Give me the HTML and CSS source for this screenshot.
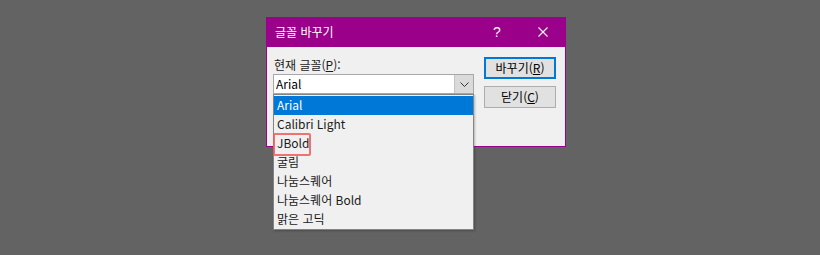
FILE: index.html
```html
<!DOCTYPE html>
<html lang="ko">
<head>
    <meta charset="UTF-8">
    <title>글꼴 바꾸기</title>
    <link rel="stylesheet" href="styles.css">
</head>
<body>
    <div class="dialog">
        <div class="titlebar">
            <span class="title">글꼴 바꾸기</span>
            <span class="caption-btn help">?</span>
            <span class="caption-btn close">
                <svg width="10" height="10" viewBox="0 0 10 10">
                    <path d="M0.5 0.5 L9.5 9.5 M9.5 0.5 L0.5 9.5" stroke="#fff" stroke-width="1.1" fill="none"/>
                </svg>
            </span>
        </div>

        <div class="dialog-body">
            <div class="left-col">
                <div class="field-label">현재 글꼴(<u>P</u>):</div>
                <div class="combo">
                    <div class="combo-value">Arial</div>
                    <div class="combo-arrow">
                        <svg width="9" height="5" viewBox="0 0 9 5">
                            <path d="M0.5 0.5 L4.5 4.5 L8.5 0.5" stroke="#333" stroke-width="1" fill="none"/>
                        </svg>
                    </div>

                    <ul class="font-list">
                        <li class="selected">Arial</li>
                        <li>Calibri Light</li>
                        <li>JBold</li>
                        <li>굴림</li>
                        <li>나눔스퀘어</li>
                        <li>나눔스퀘어 Bold</li>
                        <li>맑은 고딕</li>
                        <div class="mark"></div>
                    </ul>
                </div>
            </div>

            <div class="right-col">
                <button class="btn btn-default">바꾸기(<u>R</u>)</button>
                <button class="btn">닫기(<u>C</u>)</button>
            </div>
        </div>
    </div>
</body>
</html>
```

FILE: styles.css
```css
* {
    margin: 0;
    padding: 0;
    box-sizing: border-box;
}

body {
    background: #636363;
    height: 255px;
    font-family: "Noto Sans CJK KR", "Noto Sans", sans-serif;
    font-size: 12px;
    color: #1a1a1a;
    overflow: hidden;
}

.dialog {
    margin: 17px 0 0 266px;
    width: 300px;
    height: 130px;
    background: #f0f0f0;
    border: 1px solid #9b008a;
    border-top: none;
}

.titlebar {
    height: 30px;
    background: #9b008a;
    color: white;
    display: flex;
    align-items: center;
    padding-left: 9px;
    margin: 0 -1px;
}

.title {
    flex: 1;
    font-size: 12px;
    line-height: 30px;
}

.caption-btn {
    width: 46px;
    height: 30px;
    display: flex;
    align-items: center;
    justify-content: center;
}

.help {
    font-family: "Liberation Sans", sans-serif;
    font-size: 14px;
}

.dialog-body {
    display: flex;
    gap: 10px;
    padding: 10px 0 0 6px;
}

.left-col {
    width: 201px;
}

.field-label {
    height: 17px;
    line-height: 15px;
    padding-left: 1px;
}

.combo {
    position: relative;
    display: flex;
    height: 20px;
    border: 1px solid #a8a8a8;
    background: white;
}

.combo-value {
    flex: 1;
    padding-left: 2px;
    line-height: 17px;
    color: #000;
}

.combo-arrow {
    width: 19px;
    background: #dadada;
    border-left: 1px solid #c4c4c4;
    display: flex;
    align-items: center;
    justify-content: center;
}

.font-list {
    position: absolute;
    top: 19px;
    left: -1px;
    width: 201px;
    list-style: none;
    background: #f0f0f0;
    border: 1px solid #848484;
    padding: 1px 0 0;
    box-shadow: 1px 1px 2px rgba(0,0,0,0.25);
}

.font-list li {
    height: 19px;
    line-height: 18px;
    padding-left: 3px;
    color: #1a1a1a;
}

.font-list li.selected {
    background: #0078d7;
    color: white;
}

.mark {
    position: absolute;
    top: 38px;
    left: -1px;
    width: 38px;
    height: 23px;
    border: 2px solid rgba(238, 90, 90, 0.85);
    border-radius: 2px;
}

.right-col {
    display: flex;
    flex-direction: column;
    gap: 7px;
}

.btn {
    width: 72px;
    height: 22px;
    background: #e1e1e1;
    border: 1px solid #adadad;
    font-family: inherit;
    font-size: 12px;
    color: #000;
    line-height: 18px;
}

.btn-default {
    border: 2px solid #0078d7;
}
```
